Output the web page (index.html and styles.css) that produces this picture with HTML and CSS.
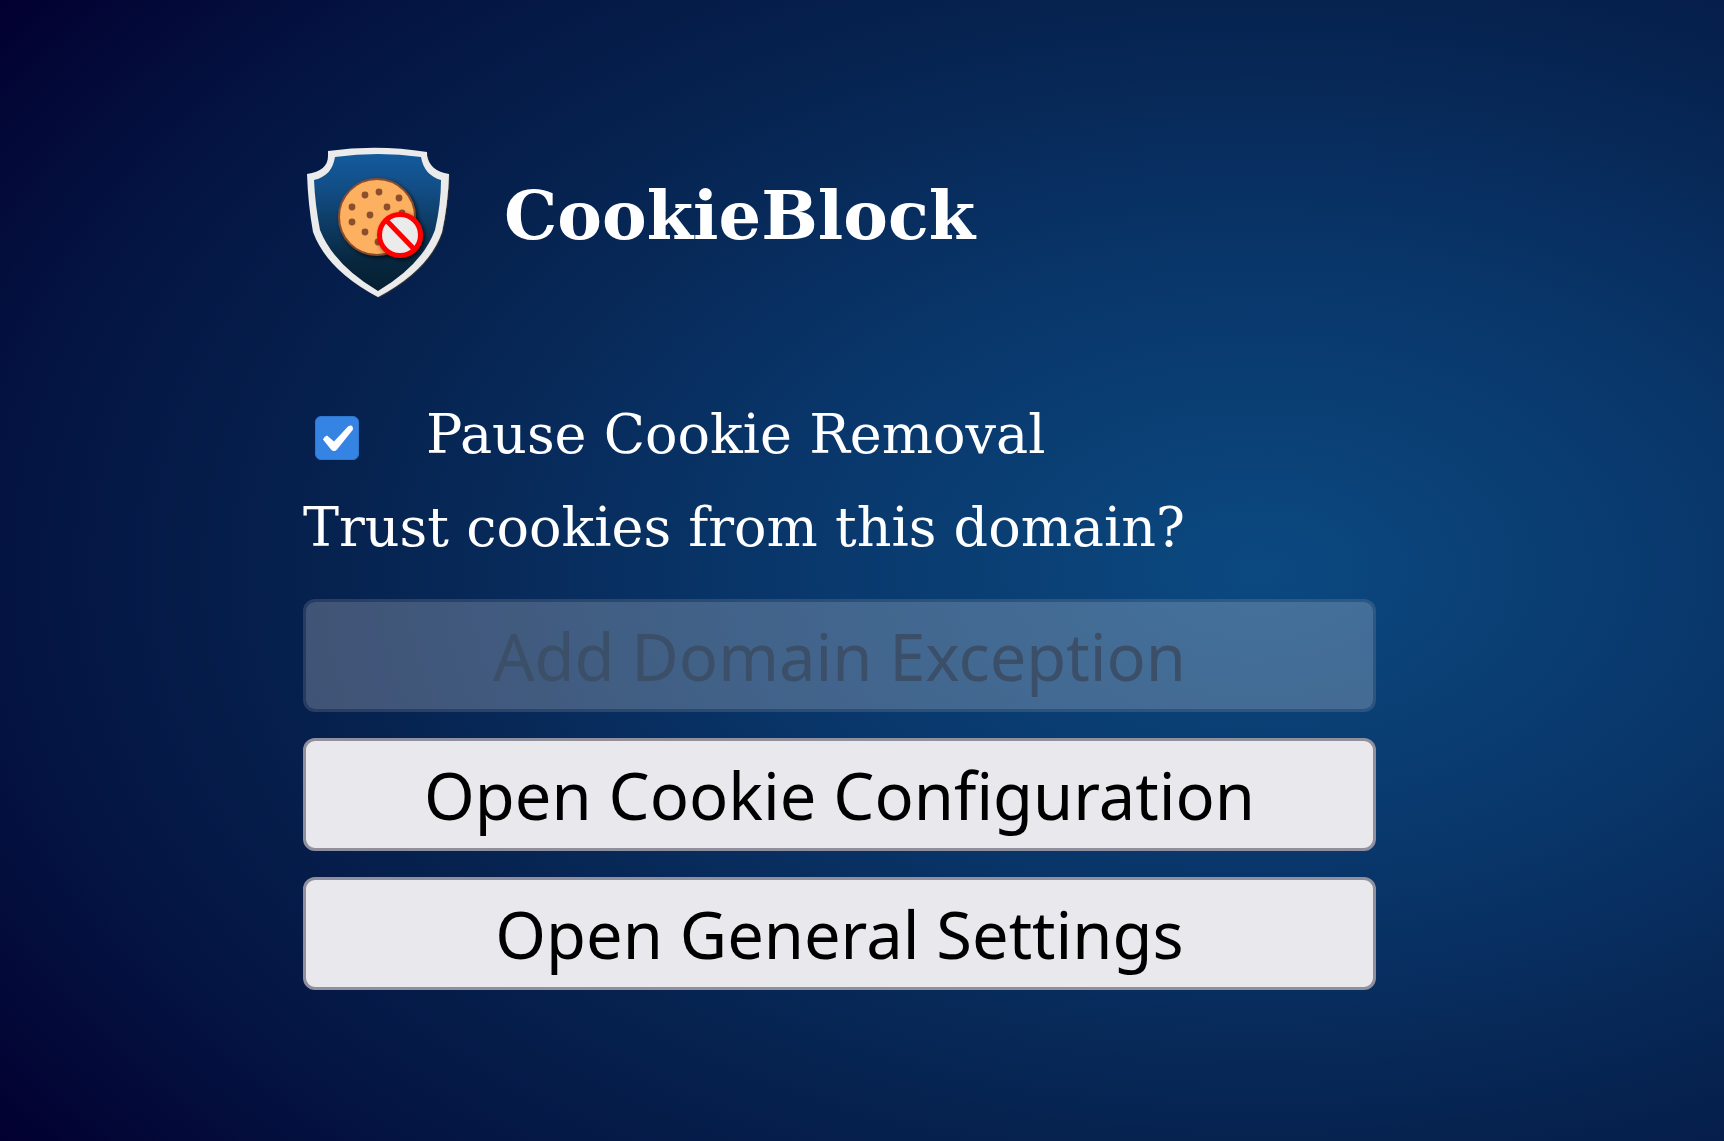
FILE: index.html
```html
<!DOCTYPE html>
<html lang="en">
<head>
<meta charset="utf-8">
<title>CookieBlock</title>
<link rel="stylesheet" href="styles.css">
</head>
<body>
<main class="popup">
  <header class="header">
    <svg class="logo" viewBox="0 0 150 156" aria-hidden="true">
      <defs>
        <linearGradient id="shield" x1="0" y1="0" x2="0" y2="1">
          <stop offset="0" stop-color="#135a9c"/>
          <stop offset="0.25" stop-color="#124e86"/>
          <stop offset="0.8" stop-color="#07263d"/>
          <stop offset="1" stop-color="#061e30"/>
        </linearGradient>
        <filter id="shadow" x="-20%" y="-20%" width="150%" height="150%">
          <feDropShadow dx="2" dy="2" stdDeviation="2" flood-color="#000" flood-opacity="0.7"/>
        </filter>
        <filter id="edge" x="-10%" y="-10%" width="120%" height="120%">
          <feDropShadow dx="1" dy="1" stdDeviation="0.5" flood-color="#333" flood-opacity="0.9"/>
        </filter>
      </defs>
      <path filter="url(#edge)" fill="#ebebeb" d="M25 5Q75 -2 124 6V10C126 20 133 26 146 28Q145 58 139 86Q126 124 75 151Q24 124 10 86Q5 58 4 28C18 26 25 20 25 10Z"/>
      <path fill="url(#shield)" d="M32 11Q75 5 118 11C120 23 127 31 138 34Q138 58 132 84Q119 119 75 145Q31 119 17 84Q12 58 11 34C24 31 30 23 32 11Z"/>
      <g filter="url(#shadow)">
        <circle cx="74" cy="71" r="38" fill="#fdb061" stroke="#8a4b2a" stroke-width="2"/>
      </g>
      <g fill="#8b4f2d">
        <circle cx="76" cy="46" r="3.4"/><circle cx="62" cy="49" r="3.4"/><circle cx="96" cy="52" r="3.4"/>
        <circle cx="49" cy="61" r="3.4"/><circle cx="84" cy="61" r="3.4"/><circle cx="67" cy="69" r="3.4"/>
        <circle cx="99" cy="67" r="3.4"/><circle cx="49" cy="76" r="3.4"/><circle cx="62" cy="86" r="3.4"/>
        <circle cx="75" cy="96" r="3.4"/>
      </g>
      <g filter="url(#shadow)">
        <circle cx="97" cy="89" r="20.500" fill="#ebebeb" stroke="#f00" stroke-width="5"/>
        <path d="M83 74L111 103" stroke="#f00" stroke-width="5"/>
      </g>
    </svg>
    <h1 class="title">CookieBlock</h1>
  </header>
  <div class="option">
    <input class="checkbox" type="checkbox" id="pause" checked>
    <label for="pause">Pause Cookie Removal</label>
  </div>
  <p class="question">Trust cookies from this domain?</p>
  <div class="actions">
    <button class="button" type="button" disabled>Add Domain Exception</button>
    <button class="button" type="button">Open Cookie Configuration</button>
    <button class="button" type="button">Open General Settings</button>
  </div>
</main>
</body>
</html>
```
FILE: styles.css
```css
* {
  box-sizing: border-box;
}

body {
  margin: 0;
  min-height: 100vh;
  background: radial-gradient(98% 92% at 73% 50%, #0b4980 0%, #09376b 28%, #06224f 55%, #041442 74%, #020030 92%);
  color: #fff;
  font-family: "DejaVu Serif", serif;
  font-size: 54px;
  line-height: 64px;
}

.popup {
  padding: 146px 348px 144px 303px;
}

.header {
  display: flex;
  align-items: flex-start;
  gap: 51px;
}

.logo {
  width: 150px;
  height: 156px;
}

.title {
  margin: 0;
  padding-top: 30px;
  font-size: 67px;
  line-height: 80px;
}

.option {
  display: flex;
  align-items: center;
  margin-top: 101px;
}

.checkbox {
  appearance: none;
  width: 44px;
  height: 44px;
  margin: 5px 67px 0 12px;
  border: 1px solid #2f78d0;
  border-radius: 6px;
  background: #3584e4;
}

.checkbox:checked::before {
  content: "";
  display: block;
  width: 100%;
  height: 100%;
  background: #fff;
  clip-path: path("M7 23Q8 20 11 19L18 25L32 10Q37 7 37 13L21 33Q18 36 15 33Z");
}

.question {
  margin: 29px 0 0;
}

.actions {
  display: grid;
  gap: 26px;
  margin-top: 39px;
}

.button {
  height: 113px;
  border: 3px solid #8f8f9d;
  border-radius: 12px;
  background: #e9e9ed;
  color: #000;
  font-family: "Noto Sans", sans-serif;
  font-size: 65px;
  line-height: 88px;
}

.button:disabled {
  border-color: rgba(143, 143, 157, 0.26);
  background: rgba(233, 233, 237, 0.26) padding-box;
  color: #3c4f69;
}
```
